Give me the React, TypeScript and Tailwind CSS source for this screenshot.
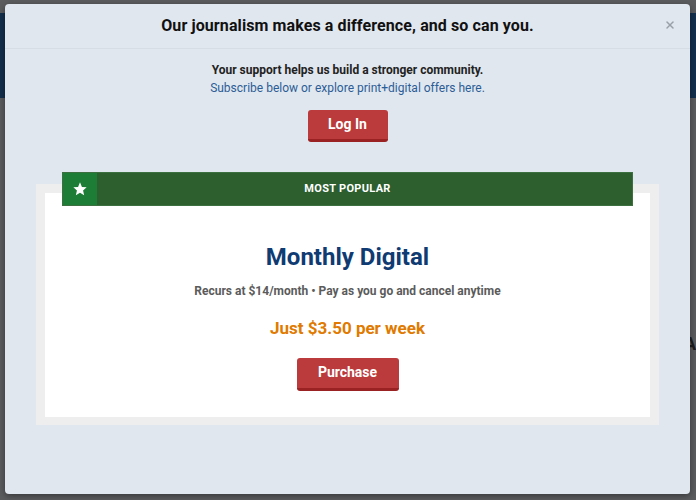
import { X } from "lucide-react";

export default function App() {
  return (
    <div className="relative w-[696px] h-[500px] overflow-hidden bg-[#5b5c5e] font-['Roboto',sans-serif]">
      {/* dimmed page underneath */}
      <div className="mt-[13px] h-[85px] bg-[#0b2a4a] opacity-90" />
      <div className="flex justify-end pr-0 pt-[232px]">
        <span className="text-[18px] font-bold text-[#1d1d1d]">A</span>
      </div>

      {/* modal */}
      <div className="absolute left-[5px] top-[4px] w-[685px] h-[490px] rounded-[4px] bg-[#e1e7ef] shadow-[0_2px_6px_rgba(0,0,0,0.4)] flex flex-col">
        <div className="relative h-[45px] border-b border-[#d7dde5] flex items-center justify-center">
          <h2 className="text-[16px] font-bold text-[#111] tracking-[0.1px]">
            Our journalism makes a difference, and so can you.
          </h2>
          <button className="absolute right-[14px] top-[15px] text-[#9aa0a7]">
            <X className="w-[12px] h-[12px]" strokeWidth={3} />
          </button>
        </div>

        <div className="flex flex-col items-center pt-[12px]">
          <p className="text-[12px] font-bold text-[#222] leading-[18px]">
            Your support helps us build a stronger community.
          </p>
          <p className="text-[12px] text-[#2c5d96] leading-[18px]">
            Subscribe below or explore print+digital offers here.
          </p>
          <button className="mt-[13px] w-[80px] h-[32px] rounded-[3px] bg-[#bb3a3b] border-b-[3px] border-[#9a2222] text-white text-[14px] font-bold">
            Log In
          </button>
        </div>

        <div className="relative mt-[42px] mx-[31px] bg-[#eeeeee] p-[9px] pb-[8px]">
          <div className="absolute left-[26px] right-[26px] top-[-12px] h-[34px] flex bg-[#2c5e2e] border border-[#3c7040]">
            <div className="w-[34px] h-full bg-[#1d7c36] flex items-center justify-center">
              <svg viewBox="0 0 24 24" className="w-[16px] h-[16px]" fill="white">
                <path d="M12 2l2.9 6.9 7.1.6-5.4 4.7 1.6 7.1L12 17.5 5.8 21.3l1.6-7.1L2 9.5l7.1-.6z" />
              </svg>
            </div>
            <div className="flex-1 flex items-center justify-center pr-[34px] text-white text-[11px] font-bold tracking-[0.3px]">
              MOST POPULAR
            </div>
          </div>
          <div className="bg-white h-[224px] flex flex-col items-center pt-[49px]">
            <h3 className="text-[24px] font-bold text-[#0f3b72] leading-[30px]">Monthly Digital</h3>
            <p className="mt-[10px] text-[12px] font-bold text-[#5b5b5b]">
              Recurs at $14/month • Pay as you go and cancel anytime
            </p>
            <p className="mt-[16px] text-[17px] font-bold text-[#e07a00]">Just $3.50 per week</p>
            <button className="mt-[16px] w-[102px] h-[33px] rounded-[3px] bg-[#bb3a3b] border-b-[3px] border-[#9a2222] text-white text-[14px] font-bold">
              Purchase
            </button>
          </div>
        </div>
      </div>
    </div>
  );
}
